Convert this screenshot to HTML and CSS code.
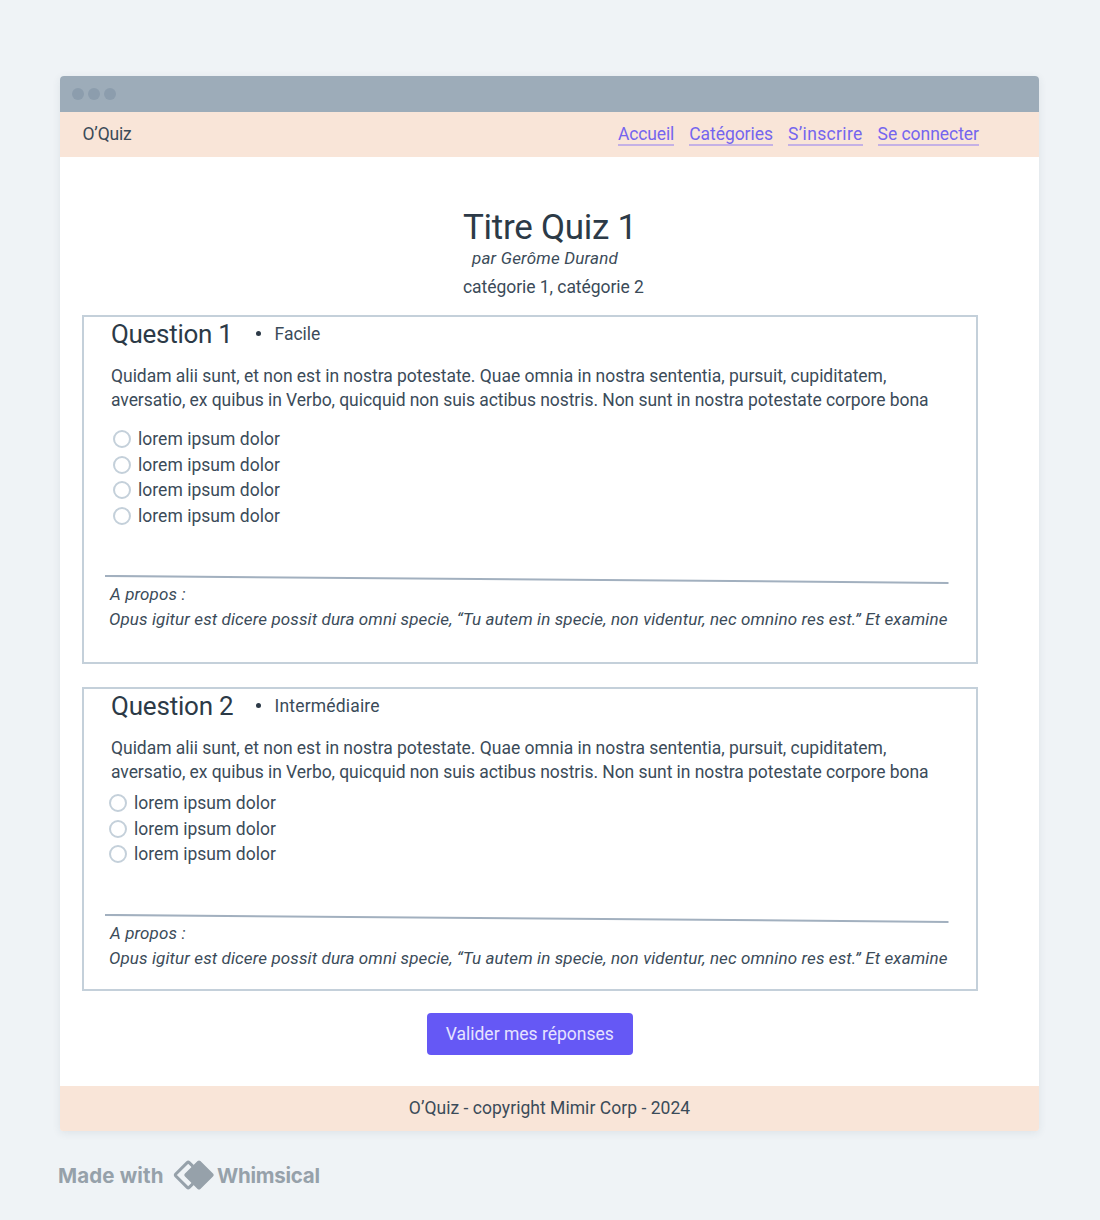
FILE: index.html
```
<!DOCTYPE html>
<html lang="fr">
<head>
  <meta charset="utf-8">
  <title>O’Quiz</title>
  <link rel="stylesheet" href="styles.css">
</head>
<body>
  <div class="window">
    <div class="titlebar"><span class="dot"></span><span class="dot"></span><span class="dot"></span></div>
    <header class="header">
      <span class="brand">O’Quiz</span>
      <nav class="nav">
        <a class="link link-home">Accueil</a>
        <a class="link">Catégories</a>
        <a class="link link-signup">S’inscrire</a>
        <a class="link">Se connecter</a>
      </nav>
    </header>
    <main class="main">
      <div class="intro">
        <h1 class="title">Titre Quiz 1</h1>
        <p class="author">par Gerôme Durand</p>
        <p class="categories">catégorie 1, catégorie 2</p>
      </div>
      <section class="card">
        <div class="card-head"><h2 class="question">Question 1</h2><span class="bullet"></span><span class="level">Facile</span></div>
        <p class="text"><span class="line">Quidam alii sunt, et non est in nostra potestate. Quae omnia in nostra sententia, pursuit, cupiditatem,</span><br><span class="line line-long">aversatio, ex quibus in Verbo, quicquid non suis actibus nostris. Non sunt in nostra potestate corpore bona</span></p>
        <ul class="answers">
          <li class="answer"><span class="radio"></span>lorem ipsum dolor</li>
          <li class="answer"><span class="radio"></span>lorem ipsum dolor</li>
          <li class="answer"><span class="radio"></span>lorem ipsum dolor</li>
          <li class="answer"><span class="radio"></span>lorem ipsum dolor</li>
        </ul>
        <svg class="rule" width="844" height="10" viewBox="0 0 844 10"><path d="M0 .9L843.5 7.9"/></svg>
        <div class="about"><p class="about-label">A propos :</p><p>Opus igitur est dicere possit dura omni specie, “Tu autem in specie, non videntur, nec omnino res est.” Et examine</p></div>
      </section>
      <section class="card card-second">
        <div class="card-head"><h2 class="question question-two">Question 2</h2><span class="bullet"></span><span class="level level-mid">Intermédiaire</span></div>
        <p class="text"><span class="line">Quidam alii sunt, et non est in nostra potestate. Quae omnia in nostra sententia, pursuit, cupiditatem,</span><br><span class="line line-long">aversatio, ex quibus in Verbo, quicquid non suis actibus nostris. Non sunt in nostra potestate corpore bona</span></p>
        <ul class="answers">
          <li class="answer"><span class="radio"></span>lorem ipsum dolor</li>
          <li class="answer"><span class="radio"></span>lorem ipsum dolor</li>
          <li class="answer"><span class="radio"></span>lorem ipsum dolor</li>
        </ul>
        <svg class="rule" width="844" height="10" viewBox="0 0 844 10"><path d="M0 .9L843.5 7.9"/></svg>
        <div class="about"><p class="about-label">A propos :</p><p>Opus igitur est dicere possit dura omni specie, “Tu autem in specie, non videntur, nec omnino res est.” Et examine</p></div>
      </section>
      <button class="submit">Valider mes réponses</button>
    </main>
    <footer class="footer">O’Quiz - copyright Mimir Corp - 2024</footer>
  </div>
  <div class="credit">
    <span class="made">Made with</span>
    <svg class="logo" width="42" height="30" viewBox="0 0 42 30">
      <path class="logo-outline" d="M20 6.4L16.2 2.6Q15.2 1.7 14.2 2.6L2.8 14Q1.9 15 2.8 16L14.2 27.4Q15.2 28.3 16.2 27.4L20 23.6"/>
      <path class="logo-solid" d="M24.6 1Q26 -.2 27.4 1L40 13.6Q41.4 15 40 16.4L27.4 29Q26 30.2 24.6 29L12 16.4Q10.6 15 12 13.6Z"/>
    </svg>
    <span class="whimsical">Whimsical</span>
  </div>
</body>
</html>
```
FILE: styles.css
```
* { box-sizing: border-box; }
body {
  margin: 0;
  padding: 76px 60px 0;
  height: 1220px;
  overflow: hidden;
  background: #eff3f6;
  color: #3b4b59;
  font: 17.5px/24px Roboto, sans-serif;
}
h1, h2, p, ul { margin: 0; padding: 0; font-weight: 400; }
.window {
  width: 979px;
  height: 1055px;
  display: flex;
  flex-direction: column;
  border-radius: 4px;
  background: #fff;
  box-shadow: 0 2px 8px rgba(40, 70, 90, .09);
}
.titlebar {
  height: 36px;
  display: flex;
  align-items: center;
  gap: 4px;
  padding-left: 12px;
  background: #9dacb9;
  border-radius: 4px 4px 0 0;
}
.dot { width: 12px; height: 12px; border-radius: 50%; background: #8c9dad; }
.header {
  height: 45px;
  display: flex;
  justify-content: space-between;
  padding: 10px 60px 0 22.5px;
  background: #f9e5d8;
}
.brand { letter-spacing: -.2px; }
.nav { display: flex; align-items: flex-start; gap: 15px; }
.link { height: 24px; color: #7565ee; border-bottom: 2px solid #c5b1e5; letter-spacing: -.04px; }
.link-home { letter-spacing: -.15px; }
.link-signup { letter-spacing: .34px; }
.main { flex: 1; display: flex; flex-direction: column; padding-left: 22px; }
.intro { padding: 51px 0 0 381px; }
.title { color: #2c3a47; font-size: 35px; line-height: 40px; letter-spacing: -.28px; }
.author { margin-top: -1px; padding-left: 9px; font-size: 17px; line-height: 22px; font-style: italic; letter-spacing: .19px; }
.categories { margin-top: 6px; line-height: 24px; letter-spacing: -.05px; }
.card { width: 896px; height: 349px; margin-top: 16px; padding-left: 21px; border: 2px solid #c4d0da; }
.card-second { height: 304px; margin-top: 23px; }
.card-head { height: 34px; display: flex; align-items: center; padding-left: 6px; }
.question { width: 145px; color: #2c3a47; font-size: 26px; line-height: 34px; letter-spacing: -.3px; }
.question-two { letter-spacing: -.2px; }
.bullet { width: 5px; height: 5px; margin: -1px 13.5px 0 0; border-radius: 50%; background: #2c3a47; }
.level { line-height: 34px; }
.level-mid { letter-spacing: .18px; }
.text { margin-top: 13px; padding-left: 6px; white-space: nowrap; }
.line { letter-spacing: -.025px; }
.line-long { letter-spacing: -.06px; }
.answers { height: 163px; padding: 14px 0 0 8px; list-style: none; }
.card-second .answers { height: 130px; padding: 6px 0 0 4px; }
.answer { height: 25.6px; display: flex; align-items: center; gap: 7px; letter-spacing: .03px; }
.answer:nth-child(2) { padding-top: 1px; }
.radio { width: 18px; height: 18px; border: 2px solid #c4d0da; border-radius: 50%; }
.rule { display: block; fill: none; stroke: #a2b0bf; stroke-width: 2; }
.about { margin-top: -3px; padding-left: 4px; font-size: 17px; font-style: italic; letter-spacing: .115px; white-space: nowrap; }
.about-label { padding-left: 1px; line-height: 25px; }
.about-label::first-line { line-height: 24px; }
.submit {
  width: 206.5px;
  height: 42px;
  margin: 21.5px 0 0 344.5px;
  padding: 0;
  border: 0;
  border-radius: 4px;
  background: #6558f5;
  color: #e6e3ff;
  font: inherit;
}
.footer { height: 45px; padding-top: 10px; background: #f9e5d8; text-align: center; letter-spacing: .04px; border-radius: 0 0 3px 3px; }
.credit { display: flex; align-items: center; height: 30px; margin-top: 29px; margin-left: -3px; color: #96a1aa; font: 700 20.5px/30px Inter, sans-serif; }
.made { width: 115px; padding: 2px 0 0 1px; flex: none; letter-spacing: .15px; }
.logo { flex: none; margin-left: 1px; }
.logo-outline { fill: none; stroke: #96a1aa; stroke-width: 3; }
.logo-solid { fill: #96a1aa; }
.whimsical { margin-left: 2px; padding-top: 2px; letter-spacing: -.25px; }
```
